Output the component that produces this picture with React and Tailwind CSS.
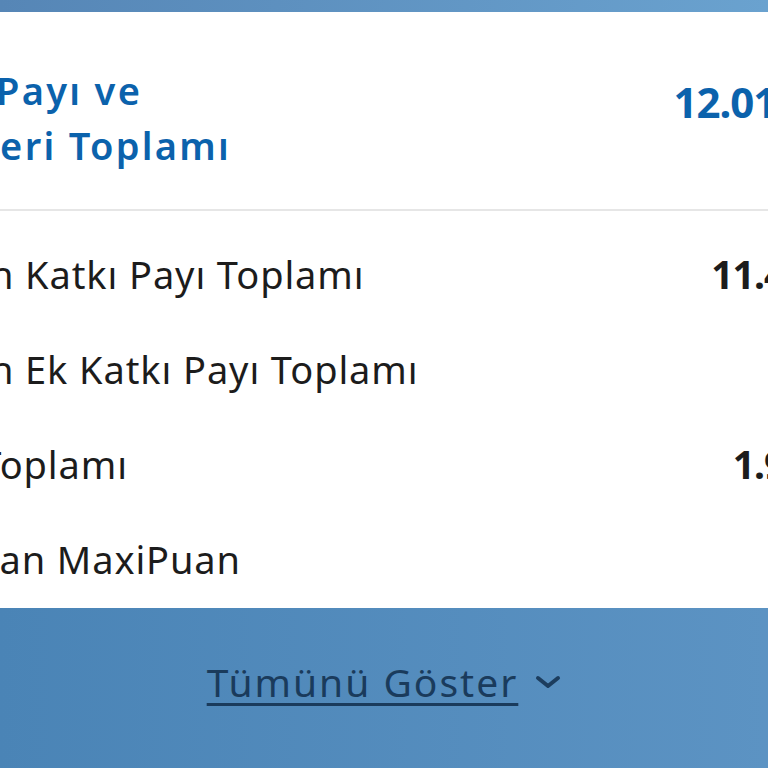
import React from 'react';

const rows = [
    { label: 'Ödenen Katkı Payı Toplamı', value: '11.456,78 TL' },
    { label: 'Ödenen Ek Katkı Payı Toplamı', value: '0,00 TL' },
    { label: 'Getiri Toplamı', value: '1.923,40 TL' },
    { label: 'Kazanılan MaxiPuan', value: '0' },
];

const ChevronDown = () => (
    <svg width="26" height="14" viewBox="0 0 26 14" fill="none">
        <path d="M3 3l10 8 10-8" stroke="#1c3d5e" strokeWidth="4" strokeLinecap="round" strokeLinejoin="round" />
    </svg>
);

const App = () => {
    return (
        <div className="w-[768px] h-[768px] overflow-hidden flex flex-col font-['Noto_Sans',sans-serif]">
            <div className="h-[12px] shrink-0 bg-gradient-to-r from-[#5686b6] to-[#6aa2cf]"></div>

            <div className="flex-1 bg-white overflow-hidden">
                <div className="w-[1100px] -ml-[134px]">
                    <div className="h-[197px] flex justify-between pt-[51px] pr-[54px]">
                        <div className="ml-[11px] text-[38px] leading-[55px] font-semibold tracking-[2.3px] text-[#0b62ac] whitespace-nowrap">
                            <div>Katkı Payı ve</div>
                            <div className="-ml-[7px]">Getirileri Toplamı</div>
                        </div>
                        <div className="pt-[18px] text-[42px] leading-[42px] font-bold text-[#0b62ac] tracking-[-1px] whitespace-nowrap">
                            12.012,34 TL
                        </div>
                    </div>
                    <div className="h-[2px] bg-[#e6e6e6]"></div>
                    <div className="pt-[16px]">
                        {rows.map((row) => (
                            <div key={row.label} className="h-[95px] flex items-center justify-between pr-[34px] text-[38px] tracking-[0.9px] text-[#1c1c1c] whitespace-nowrap">
                                <span>{row.label}</span>
                                <span className="text-[39px] font-bold tracking-[-1px]">{row.value}</span>
                            </div>
                        ))}
                    </div>
                </div>
            </div>

            <div className="h-[160px] shrink-0 bg-gradient-to-r from-[#4a84b6] to-[#5c93c3] flex items-start justify-center pt-[45px]">
                <div className="flex items-center gap-[17px]">
                    <span className="text-[39px] tracking-[2px] text-[#1a3b5c] underline underline-offset-[6px] decoration-[3px]">Tümünü Göster</span>
                    <ChevronDown />
                </div>
            </div>
        </div>
    );
};

export default App;
